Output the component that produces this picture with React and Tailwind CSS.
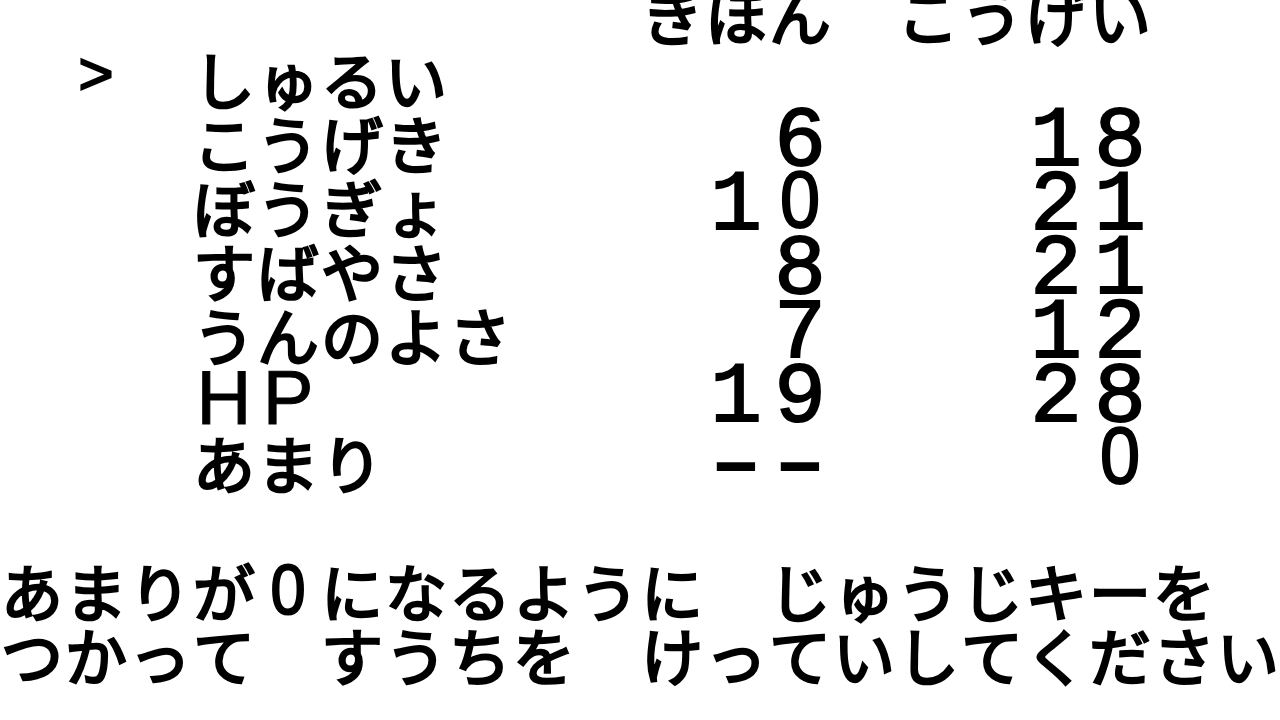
// Stat allocation screen: text sits on a 20-column grid of 64px tiles.
const COLS = 20;

const STATS = [
  ['こうげき', 6, 18],
  ['ぼうぎょ', 10, 21],
  ['すばやさ', 8, 21],
  ['うんのよさ', 7, 12],
  ['HP', 19, 28],
  ['あまり', '--', 0],
];

function row(parts) {
  const cells = Array(COLS).fill(' ');
  parts.forEach(([col, text]) => {
    [...text].forEach((ch, i) => {
      cells[col + i] = ch;
    });
  });
  return cells;
}

// right-align a value so its last character lands in column `end`
const num = (end, v) => [end - String(v).length + 1, String(v)];

const ROWS = [
  row([[10, 'きほん'], [14, 'こうげい']]),
  row([[1, '>'], [3, 'しゅるい']]),
  ...STATS.map(([label, base, bonus]) => row([[3, label], num(12, base), num(17, bonus)])),
  row([]),
  row([[0, 'あまりが0になるように'], [12, 'じゅうじキーを']]),
  row([[0, 'つかって すうちを けっていしてください']]),
];

function Cell({ ch, small }) {
  let cls = "font-['Noto_Sans_CJK_JP',sans-serif] text-[62px] [-webkit-text-stroke:2.5px_black]";
  if (ch === '0') cls = `font-['Liberation_Sans',sans-serif] ${small ? 'text-[70px]' : 'text-[80px] -translate-y-[6px]'} scale-x-90 [-webkit-text-stroke:2px_black]`;
  else if (/[1-9]/.test(ch)) cls = "font-['Liberation_Mono',monospace] text-[86px] [-webkit-text-stroke:2px_black]";
  else if (ch === '-') cls = "font-['Liberation_Mono',monospace] text-[86px] scale-x-150 translate-y-[4px] [-webkit-text-stroke:2px_black]";
  else if (/[A-Z]/.test(ch)) cls = "font-['Liberation_Sans',sans-serif] text-[76px] [-webkit-text-stroke:1px_black]";
  else if (ch === '>') cls = "font-['Liberation_Mono',monospace] text-[60px] [-webkit-text-stroke:2px_black]";
  return (
    <div className={`w-16 h-16 shrink-0 flex items-center justify-center leading-none ${cls}`}>
      {ch === ' ' ? '\u00a0' : ch}
    </div>
  );
}

export default function App() {
  return (
    <div className="w-[1280px] h-[720px] bg-white text-black overflow-hidden">
      <div className="flex flex-col -mt-[18px]">
        {ROWS.map((cells, r) => (
          <div key={r} className="flex">
            {cells.map((ch, c) => (
              <Cell key={c} ch={ch} small={r >= 9} />
            ))}
          </div>
        ))}
      </div>
    </div>
  );
}
